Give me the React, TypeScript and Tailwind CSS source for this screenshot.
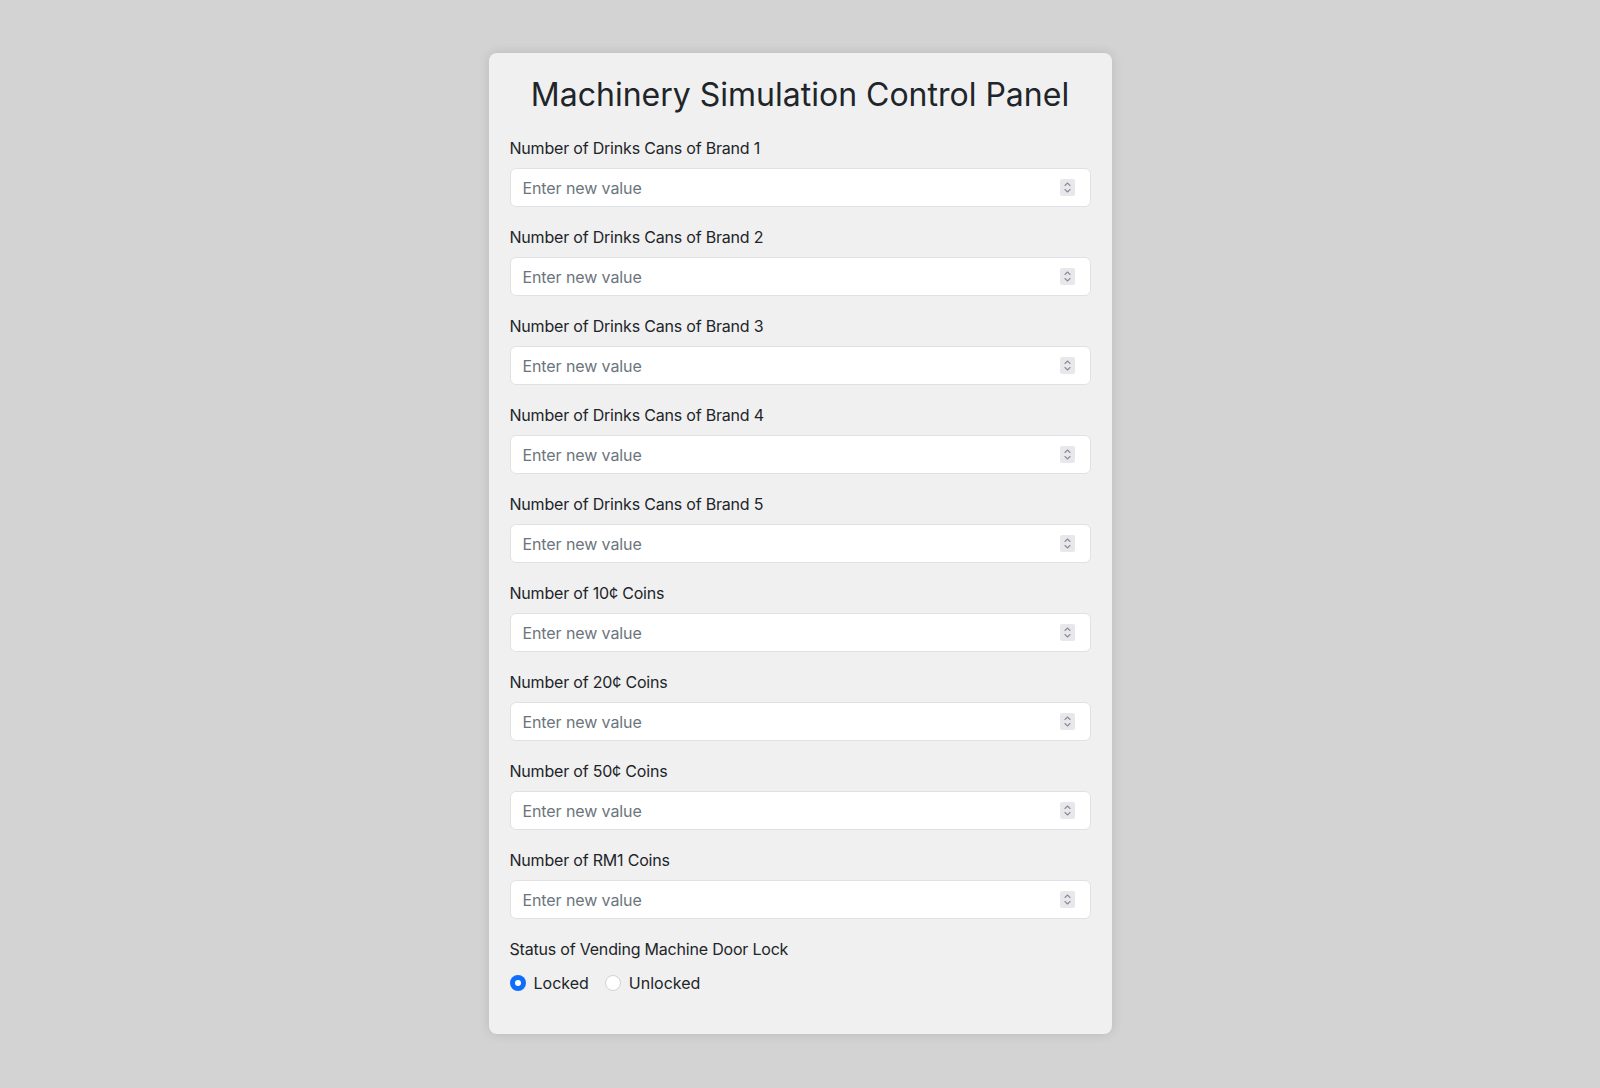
import { useState } from "react";

const fields = [
  "Number of Drinks Cans of Brand 1",
  "Number of Drinks Cans of Brand 2",
  "Number of Drinks Cans of Brand 3",
  "Number of Drinks Cans of Brand 4",
  "Number of Drinks Cans of Brand 5",
  "Number of 10¢ Coins",
  "Number of 20¢ Coins",
  "Number of 50¢ Coins",
  "Number of RM1 Coins",
];

function Spinner() {
  return (
    <span className="flex h-[17px] w-[15px] flex-col items-center justify-center rounded-[2px] bg-[#e8e8ec]">
      <svg width="9" height="13" viewBox="0 0 9 13" fill="none" stroke="#8a8d93" strokeWidth="1.1" strokeLinecap="round" strokeLinejoin="round">
        <path d="M2 4.5 L4.5 2 L7 4.5" />
        <path d="M2 8.5 L4.5 11 L7 8.5" />
      </svg>
    </span>
  );
}

function NumberField({ label }: { label: string }) {
  return (
    <div className="mb-[18px]">
      <label className="mb-2 block text-base leading-6 tracking-[-0.2px] text-[#212529]">{label}</label>
      <div className="flex h-[39px] items-center rounded-[6px] border border-[#dee2e6] bg-white pl-[12px] pr-[15px]">
        <input
          type="text"
          inputMode="numeric"
          placeholder="Enter new value"
          className="min-w-0 flex-1 bg-transparent text-base tracking-[-0.1px] text-[#212529] outline-none placeholder:text-[#6c757d]"
        />
        <Spinner />
      </div>
    </div>
  );
}

function Radio({ checked, label, onClick }: { checked: boolean; label: string; onClick: () => void }) {
  return (
    <button type="button" onClick={onClick} className="flex items-center gap-2 text-base leading-6 text-[#212529]">
      {checked ? (
        <span className="flex h-4 w-4 items-center justify-center rounded-full bg-[#0d6efd]">
          <span className="h-[6px] w-[6px] rounded-full bg-white" />
        </span>
      ) : (
        <span className="h-4 w-4 rounded-full border border-[#cfd2d6] bg-white" />
      )}
      {label}
    </button>
  );
}

export default function App() {
  const [locked, setLocked] = useState(true);
  return (
    <div className="min-h-[1088px] bg-[#d3d3d3] pt-[53px]" style={{ fontFamily: "Inter, 'Noto Sans', sans-serif" }}>
      <div className="mx-auto w-[623px] rounded-lg bg-[#f0f0f0] px-[21px] pt-[23px] pb-[39px] shadow-[0_0_12px_rgba(0,0,0,0.12)]">
        <h1 className="mb-[22px] text-center text-[32px] leading-[38px] font-normal text-[#212529]">
          Machinery Simulation Control Panel
        </h1>
        {fields.map((f) => (
          <NumberField key={f} label={f} />
        ))}
        <div>
          <div className="mb-[10px] text-base leading-6 tracking-[-0.2px] text-[#212529]">Status of Vending Machine Door Lock</div>
          <div className="flex items-center gap-[16px]">
            <Radio checked={locked} label="Locked" onClick={() => setLocked(true)} />
            <Radio checked={!locked} label="Unlocked" onClick={() => setLocked(false)} />
          </div>
        </div>
      </div>
    </div>
  );
}
